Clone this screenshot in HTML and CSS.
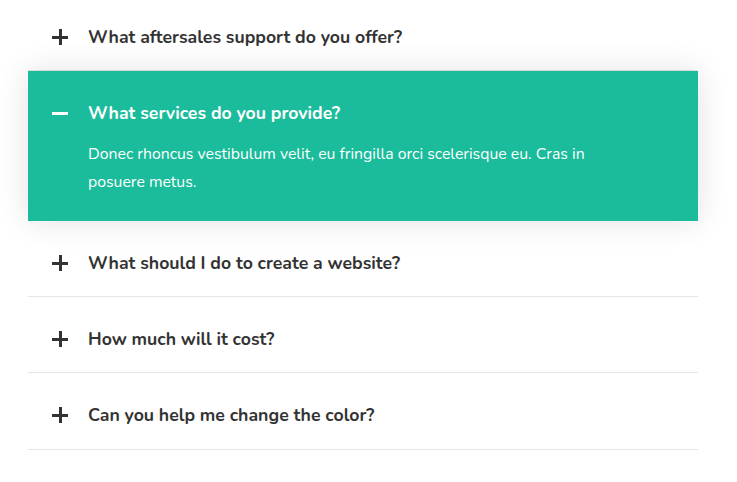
FILE: index.html
```html
<!DOCTYPE html>
<html>
<head>
<meta charset="utf-8">
<link rel="stylesheet" href="styles.css">
</head>
<body>
<div class="accordion">
  <div class="item">
    <div class="head"><span class="icon plus"></span><span class="title">What aftersales support do you offer?</span></div>
  </div>
  <div class="item active">
    <div class="head"><span class="icon minus"></span><span class="title">What services do you provide?</span></div>
    <p class="body">Donec rhoncus vestibulum velit, eu fringilla orci scelerisque eu. Cras in posuere metus.</p>
  </div>
  <div class="item">
    <div class="head"><span class="icon plus"></span><span class="title">What should I do to create a website?</span></div>
  </div>
  <div class="item">
    <div class="head"><span class="icon plus"></span><span class="title">How much will it cost?</span></div>
  </div>
  <div class="item">
    <div class="head"><span class="icon plus"></span><span class="title">Can you help me change the color?</span></div>
  </div>
</div>
</body>
</html>
```
FILE: styles.css
```css
html, body { margin: 0; padding: 0; background: #fff; }
body { font-family: "Nunito", "Lato", "Open Sans", sans-serif; color: #333; }
.accordion { width: 670px; margin: -5px 0 0 28px; }
.item { padding: 30px 24px 21px; border-bottom: 1px solid #e6e6e6; }
.item:last-child { padding-bottom: 22px; }
.item.active { background: #1abc9b; color: #fff; border-bottom-color: transparent; box-shadow: 0 0 30px rgba(0,0,0,0.12); padding-bottom: 24px; position: relative; }
.head { display: flex; align-items: center; height: 24px; gap: 20px; }
.title { font-weight: 700; font-size: 17.7px; line-height: 24px; }
.icon { width: 16px; height: 16px; position: relative; flex: none; }
.icon::before, .icon::after { content: ""; position: absolute; background: currentColor; }
.icon::before { left: 0; right: 0; top: 7px; height: 2.5px; }
.plus::after { top: 0; bottom: 0; left: 7px; width: 2.5px; }
.body { margin: 15px 0 0 36px; font-size: 15.8px; line-height: 28px; max-width: 530px; }
```
